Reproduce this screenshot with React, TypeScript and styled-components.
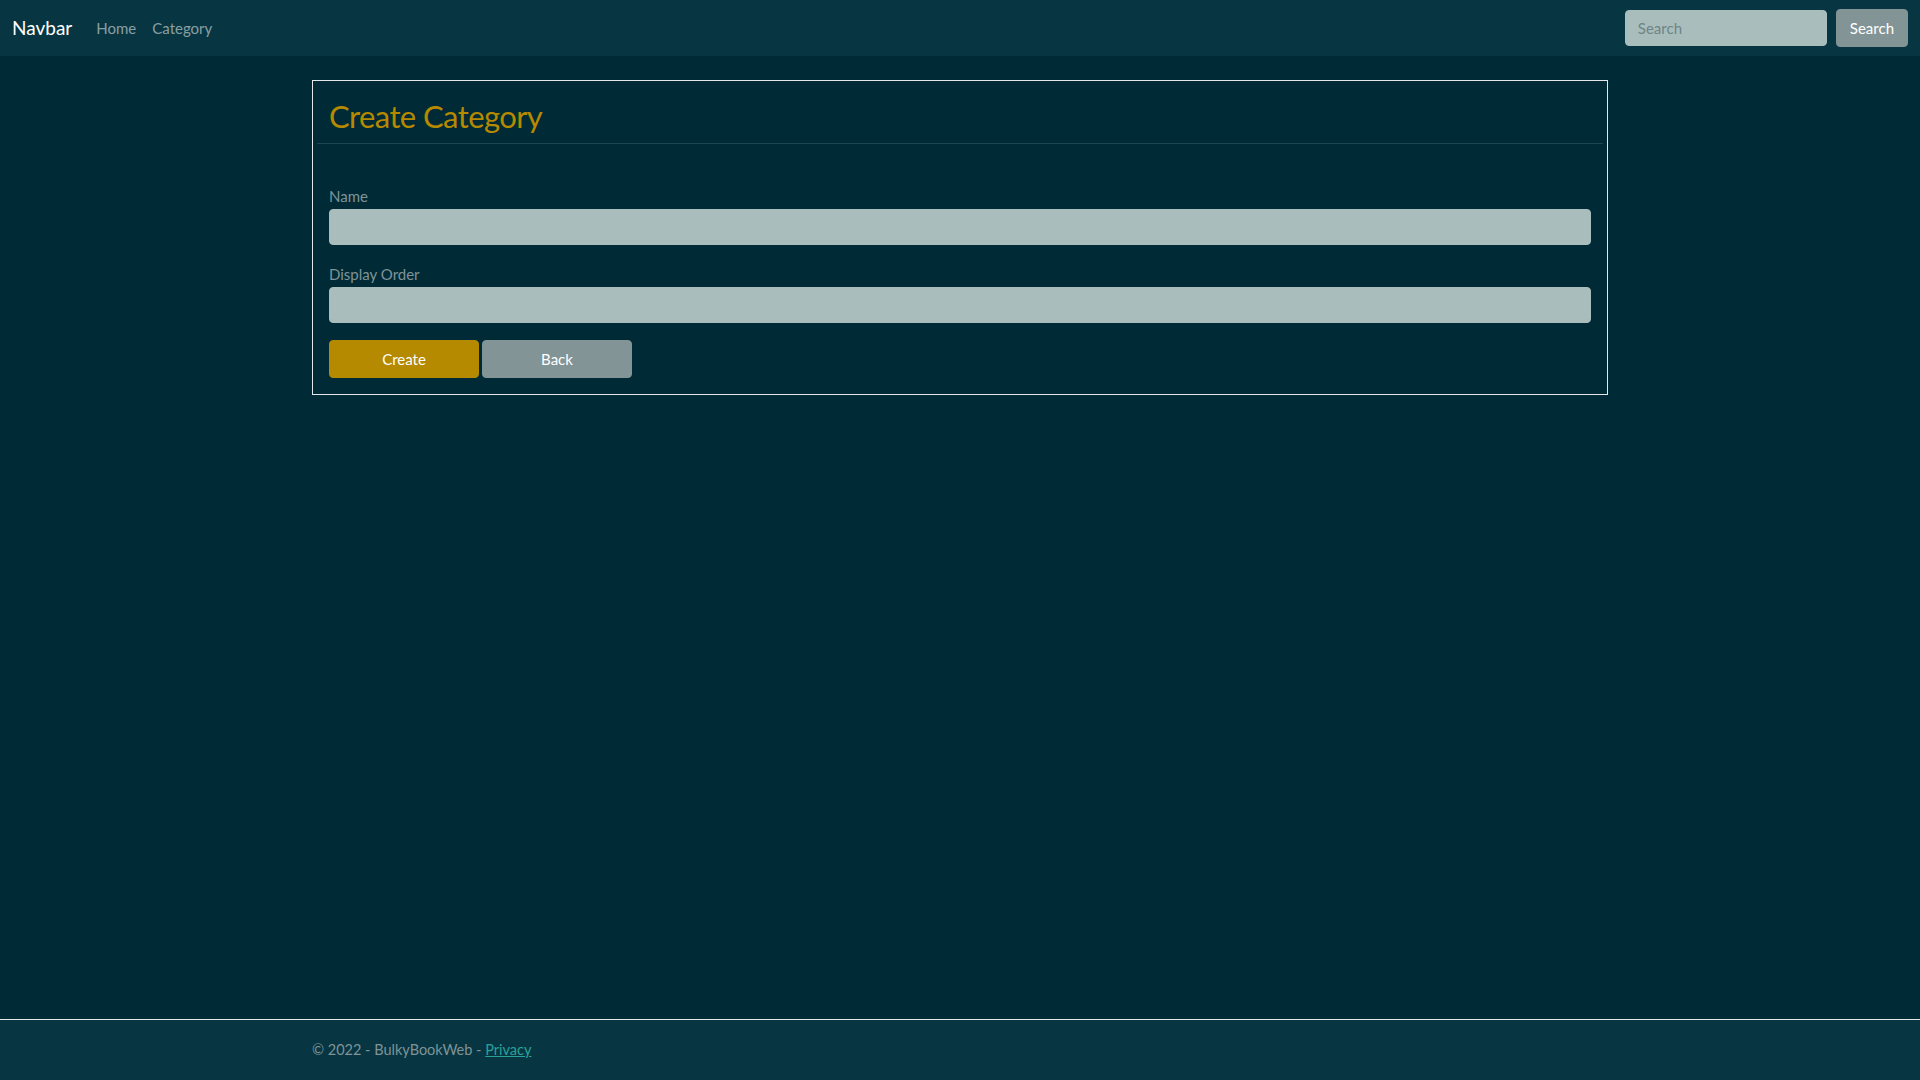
import { FC } from 'react';
import styled, { createGlobalStyle } from 'styled-components';

const GlobalStyle = createGlobalStyle`
	* {
		box-sizing: border-box;
	}
	body {
		margin: 0;
		background: #002b36;
		color: #839496;
		font-family: Lato, 'Liberation Sans', sans-serif;
		font-size: 15px;
		line-height: 1.5;
	}
`;

const Page = styled.div`
	min-height: 100vh;
	display: flex;
	flex-direction: column;
`;

const Navbar = styled.nav`
	height: 56px;
	background: #073642;
	display: flex;
	align-items: center;
	padding: 0 12px;
`;

const Brand = styled.a`
	color: #fff;
	font-size: 19px;
	margin-right: 16px;
	text-decoration: none;
`;

const NavLink = styled.a`
	color: #8a9fa3;
	font-size: 15px;
	padding: 8px;
	text-decoration: none;
`;

const SearchForm = styled.form`
	margin-left: auto;
	display: flex;
	align-items: center;
	gap: 9px;
`;

const SearchInput = styled.input`
	width: 202px;
	height: 36px;
	padding: 6px 12px;
	border: 1px solid #a9bdbd;
	border-radius: 4px;
	background: #a9bdbd;
	font: inherit;
	font-size: 15px;

	&::placeholder {
		color: #6e8587;
	}
`;

const Button = styled.button<{ $variant: 'primary' | 'secondary'; $width?: number }>`
	height: 38px;
	width: ${p => (p.$width ? `${p.$width}px` : 'auto')};
	padding: 0 13px;
	border: 1px solid ${p => (p.$variant === 'primary' ? '#b58900' : '#839496')};
	border-radius: 4px;
	background: ${p => (p.$variant === 'primary' ? '#b58900' : '#839496')};
	color: #fff;
	font: inherit;
	font-size: 15px;
	cursor: pointer;
`;

const Main = styled.main`
	flex: 1;
	width: 1296px;
	margin: 0 auto;
	padding-bottom: 16px;
`;

const Card = styled.form`
	margin-top: 24px;
	border: 1px solid #e4e8ea;
	padding: 16px;
`;

const HeaderRow = styled.div`
	margin: 0 -12px;
	padding: 0 12px 8px;
	border-bottom: 1px solid #1f4550;
`;

const Title = styled.h2`
	margin: 0;
	color: #b58900;
	font-size: 31px;
	font-weight: 400;
	letter-spacing: -0.6px;
	line-height: 38px;
`;

const FormBody = styled.div`
	padding-top: 39px;
`;

const Field = styled.div`
	margin-bottom: 16px;
`;

const Label = styled.label`
	display: block;
	font-size: 15px;
	line-height: 26px;
	color: #7f9398;
`;

const TextInput = styled.input`
	display: block;
	width: 100%;
	height: 36px;
	padding: 6px 12px;
	border: 1px solid #a9bdbd;
	border-radius: 4px;
	background: #a9bdbd;
	font: inherit;
`;

const Actions = styled.div`
	display: flex;
	gap: 3px;
	padding-top: 1px;
`;

const Footer = styled.footer`
	border-top: 1px solid #e4e8ea;
	background: #073642;
	height: 61px;
	line-height: 60px;
	font-size: 14.5px;
`;

const FooterInner = styled.div`
	width: 1296px;
	margin: 0 auto;
	color: #7f9398;
`;

const FooterLink = styled.a`
	color: #2aa198;
	text-decoration: underline;
`;

const App: FC = () => (
	<Page>
		<GlobalStyle />
		<Navbar>
			<Brand href="#">Navbar</Brand>
			<NavLink href="#">Home</NavLink>
			<NavLink href="#">Category</NavLink>
			<SearchForm onSubmit={e => e.preventDefault()}>
				<SearchInput placeholder="Search" />
				<Button $variant="secondary" type="submit">
					Search
				</Button>
			</SearchForm>
		</Navbar>
		<Main>
			<Card onSubmit={e => e.preventDefault()}>
				<HeaderRow>
					<Title>Create Category</Title>
				</HeaderRow>
				<FormBody>
					<Field>
						<Label htmlFor="Name">Name</Label>
						<TextInput id="Name" />
					</Field>
					<Field>
						<Label htmlFor="DisplayOrder">Display Order</Label>
						<TextInput id="DisplayOrder" />
					</Field>
					<Actions>
						<Button $variant="primary" $width={150} type="submit">
							Create
						</Button>
						<Button $variant="secondary" $width={150} type="button">
							Back
						</Button>
					</Actions>
				</FormBody>
			</Card>
		</Main>
		<Footer>
			<FooterInner>
				© 2022 - BulkyBookWeb - <FooterLink href="#">Privacy</FooterLink>
			</FooterInner>
		</Footer>
	</Page>
);

export default App;
